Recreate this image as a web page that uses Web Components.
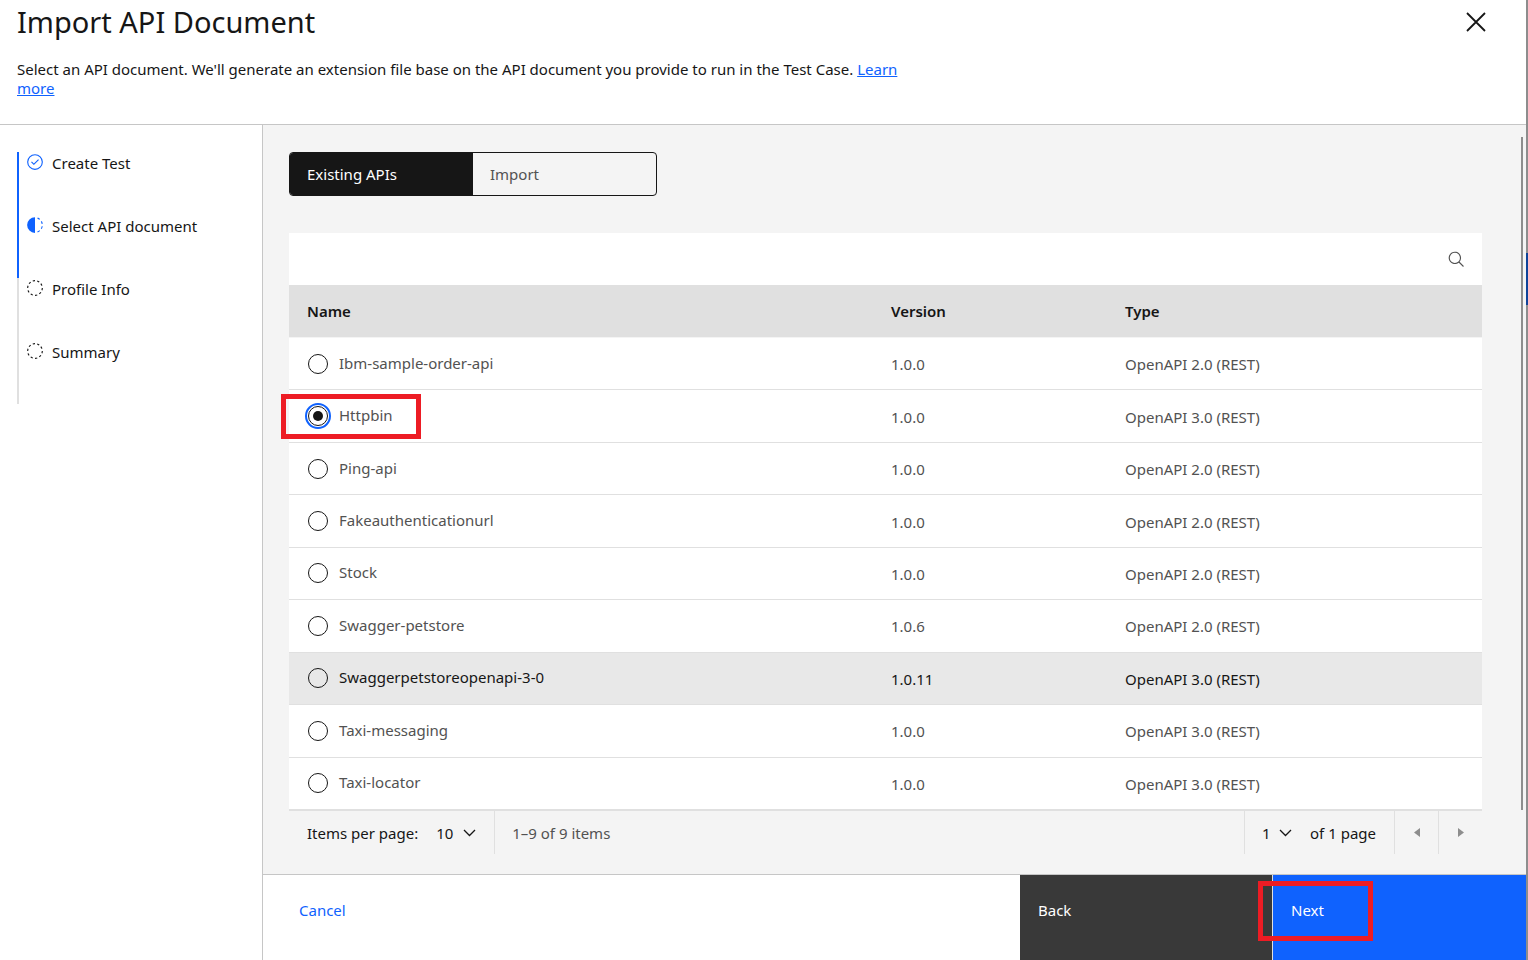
<!DOCTYPE html>
<html lang="en">
<head>
<meta charset="utf-8">
<title>Import API Document</title>
<style>
  html { background: #8d8d8d; }
  body {
    margin: 0;
    color: #161616;
    font: 15px/20px "Noto Sans", "Open Sans", sans-serif;
    --blue: #0f62fe;
    --line: #c6c6c6;
    --soft: #e0e0e0;
    --muted: #525252;
    --layer: #f4f4f4;
  }
</style>
</head>
<body>
<wizard-shell>
  <wizard-header slot="header" heading="Import API Document">
    Select an API document. We'll generate an extension file base on the API document you provide to run in the Test Case.
    <a slot="link" href="#learn">Learn more</a>
  </wizard-header>
  <progress-steps slot="side">
    <progress-step state="complete">Create Test</progress-step>
    <progress-step state="current">Select API document</progress-step>
    <progress-step>Profile Info</progress-step>
    <progress-step>Summary</progress-step>
  </progress-steps>
  <content-switcher></content-switcher>
  <api-table></api-table>
  <page-bar></page-bar>
  <wizard-footer slot="footer"></wizard-footer>
</wizard-shell>

<script>
const define = (name, html, setup) => {
  const template = document.createElement('template');
  template.innerHTML = '<style>*{box-sizing:border-box}button,select,input{font:inherit;color:inherit}</style>' + html;
  customElements.define(name, class extends HTMLElement {
    connectedCallback() {
      if (this.shadowRoot) return;
      const root = this.attachShadow({ mode: 'open' });
      root.append(template.content.cloneNode(true));
      if (setup) setup(this, root);
    }
  });
};

define('wizard-shell', `
<style>
  :host { display: grid; grid-template: auto 1fr auto / 263px minmax(0, 1fr); position: relative; min-height: 100vh; margin-right: 2px; background: #fff; }
  header { grid-column: 1 / -1; border-bottom: 1px solid var(--line); }
  aside { grid-row: 2 / 4; border-right: 1px solid var(--line); padding: 27px 16px; }
  main { display: flex; background: var(--layer); }
  .content { flex: 1; min-width: 0; padding: 27px 39px 20px 26px; }
  .bar { width: 2px; margin: 12px 3px 64px 0; background: #8d8d8d; }
  .edge { position: absolute; left: 100%; top: 253px; width: 2px; height: 52px; background: #0f4399; }
</style>
<header><slot name="header"></slot></header>
<aside><slot name="side"></slot></aside>
<main><div class="content"><slot></slot></div><div class="bar"></div></main>
<slot name="footer"></slot>
<div class="edge"></div>`);

define('wizard-header', `
<style>
  :host { display: flex; justify-content: space-between; align-items: flex-start; height: 124px; padding: 0 34px 0 17px; }
  h1 { margin: 2px 0 18px; font-size: 29px; line-height: 40px; font-weight: 400; }
  p { margin: 0; max-width: 888px; line-height: 19px; }
  ::slotted(a) { color: var(--blue); }
  button { display: grid; place-items: center; width: 32px; height: 32px; margin-top: 6px; padding: 0; border: 0; background: none; }
</style>
<div><h1></h1><p><slot></slot> <slot name="link"></slot></p></div>
<button type="button" aria-label="Close"><svg width="20" height="20" fill="none" stroke="#161616" stroke-width="1.8"><path d="M1 1l18 18M19 1L1 19"/></svg></button>`,
(host, root) => {
  root.querySelector('h1').textContent = host.getAttribute('heading');
});

define('progress-steps', `
<style>:host { display: block; }</style><slot></slot>`);

const STEP_ICONS = {
  complete: '<path d="M14 21.414L9 16.413 10.413 15 14 18.586 21.585 11 23 12.415z"/><path d="M16 2a14 14 0 1014 14A14 14 0 0016 2zm0 26a12 12 0 1112-12 12 12 0 01-12 12z"/>',
  current: '<path d="M23.764 6.859l1.285-1.531A13.976 13.976 0 0020.867 2.887l-.683 1.878A11.973 11.973 0 0123.764 6.859zM27.81 14l1.968-.413A13.889 13.889 0 0028.14 9.046L26.409 10A12.52 12.52 0 0127.81 14zM20.184 27.235l.683 1.878a13.976 13.976 0 004.182-2.441l-1.285-1.531A11.973 11.973 0 0120.184 27.235zM26.409 22L28.14 23a14.138 14.138 0 001.638-4.587L27.81 18.066A12.152 12.152 0 0126.409 22zM16 30V2a14 14 0 000 28z"/>',
  pending: '<path d="M7.7 4.7a14.7 14.7 0 00-3 3.1L6.3 9A13.26 13.26 0 018.9 6.3zM4.6 12.3l-1.9-.6A12.51 12.51 0 002 16H4A11.48 11.48 0 014.6 12.3zM2.7 20.4a14.4 14.4 0 002 3.9l1.6-1.2a12.89 12.89 0 01-1.7-3.3zM7.8 27.3a14.4 14.4 0 003.9 2l.6-1.9A12.89 12.89 0 019 25.7zM11.7 2.7l.6 1.9A11.48 11.48 0 0116 4V2A12.51 12.51 0 0011.7 2.7zM24.2 27.3a15.18 15.18 0 003.1-3.1L25.7 23A11.53 11.53 0 0123 25.7zM27.4 19.7l1.9.6A15.47 15.47 0 0030 16H28A11.48 11.48 0 0127.4 19.7zM29.2 11.6a14.4 14.4 0 00-2-3.9L25.6 8.9a12.89 12.89 0 011.7 3.3zM24.1 4.6a14.4 14.4 0 00-3.9-2l-.6 1.9a12.89 12.89 0 013.3 1.7zM20.3 29.3l-.6-1.9A11.48 11.48 0 0116 28v2A21.42 21.42 0 0020.3 29.3z"/>'
};
define('progress-step', `
<style>
  :host { display: flex; align-items: flex-start; gap: 8px; min-height: 63px; margin-left: 1px; padding-left: 7px; border-left: 2px solid var(--soft); }
  :host([state]) { border-color: var(--blue); }
  svg { flex: none; margin-top: 1px; fill: #161616; }
  :host([state]) svg { fill: var(--blue); }
  span { margin-top: 1px; }
</style>
<svg width="18" height="18" viewBox="0 0 32 32"></svg><span><slot></slot></span>`,
(host, root) => {
  root.querySelector('svg').innerHTML = STEP_ICONS[host.getAttribute('state') || 'pending'];
});

define('content-switcher', `
<style>
  :host { display: grid; grid-template-columns: 1fr 1fr; width: 368px; height: 44px; margin-bottom: 37px; border: 1px solid #161616; border-radius: 4px; overflow: hidden; box-sizing: border-box; }
  button { border: 0; padding: 0 17px; text-align: left; background: none; color: var(--muted); }
  button[aria-selected="true"] { background: #161616; color: #fff; }
</style>
<button type="button" role="tab" aria-selected="true">Existing APIs</button>
<button type="button" role="tab" aria-selected="false">Import</button>`);

const APIS = [
  ['Ibm-sample-order-api', '1.0.0', '2.0'],
  ['Httpbin', '1.0.0', '3.0'],
  ['Ping-api', '1.0.0', '2.0'],
  ['Fakeauthenticationurl', '1.0.0', '2.0'],
  ['Stock', '1.0.0', '2.0'],
  ['Swagger-petstore', '1.0.6', '2.0'],
  ['Swaggerpetstoreopenapi-3-0', '1.0.11', '3.0'],
  ['Taxi-messaging', '1.0.0', '3.0'],
  ['Taxi-locator', '1.0.0', '3.0']
];
define('api-table', `
<style>
  :host { display: block; }
  .tools { display: flex; justify-content: flex-end; height: 52px; background: #fff; }
  .tools button { display: grid; place-items: center; width: 52px; padding: 0 1px 1px 0; border: 0; background: none; }
  table { width: 100%; height: 525px; table-layout: fixed; border-collapse: separate; border-spacing: 0; }
  .version { width: 234px; } .type { width: 375px; }
  th { height: 53px; padding: 0 18px; text-align: left; font-weight: 600; background: var(--soft); border-bottom: 1px solid var(--layer); }
  td { padding: 0 18px; color: var(--muted); background: #fff; border-bottom: 1px solid var(--soft); }
  td:first-child { position: relative; }
  td:not(:first-child) { padding-top: 1px; }
  tr.hover td { background: #e8e8e8; color: #161616; }
  label { display: flex; align-items: center; gap: 11px; }
  label span { padding-bottom: 2px; }
  input { appearance: none; display: grid; place-items: center; width: 20px; height: 20px; margin: 0 0 0 1px; border: 1px solid #161616; border-radius: 50%; }
  input:checked { outline: 2px solid var(--blue); outline-offset: 1px; }
  input:checked::before { content: ""; width: 10px; height: 10px; border-radius: 50%; background: #161616; }
  .mark { position: absolute; left: -8px; top: 4px; width: 140px; height: 45px; border: 5px solid #ed1c24; pointer-events: none; }
</style>
<div class="tools"><button type="button" aria-label="Search"><svg width="18" height="18" viewBox="0 0 32 32" fill="#525252"><path d="M30 28.59L22.45 21A11 11 0 1021 22.45L28.59 30zM5 14a9 9 0 119 9 9 9 0 01-9-9z"/></svg></button></div>
<table>
  <colgroup><col><col class="version"><col class="type"></colgroup>
  <thead><tr><th scope="col">Name</th><th scope="col">Version</th><th scope="col">Type</th></tr></thead>
  <tbody></tbody>
</table>`,
(host, root) => {
  root.querySelector('tbody').innerHTML = APIS.map(([name, version, spec]) => `
    <tr${name.startsWith('Swaggerpet') ? ' class="hover"' : ''}>
      <td><label for="${name}"><input type="radio" name="api" id="${name}"${name === 'Httpbin' ? ' checked' : ''}><span>${name}</span></label>${name === 'Httpbin' ? '<div class="mark"></div>' : ''}</td>
      <td>${version}</td><td>OpenAPI ${spec} (REST)</td>
    </tr>`).join('');
});

define('page-bar', `
<style>
  :host { display: flex; height: 44px; border-top: 1px solid var(--soft); line-height: 44px; box-sizing: border-box; }
  .cell { display: flex; align-items: center; border-right: 1px solid var(--soft); padding: 0 18px; }
  .range { flex: 1; padding-left: 17px; color: var(--muted); }
  .pick { display: grid; align-items: center; margin-left: 18px; }
  .pick > * { grid-area: 1 / 1; }
  select { appearance: none; width: 40px; height: 43px; padding: 0; border: 0; background: none; }
  .pick svg { justify-self: end; margin-top: 2px; pointer-events: none; }
  .pages { padding-left: 0; }
  .pages .pick { margin: 0 18px 0 17px; }
  .pages select { width: 30px; }
  button { box-sizing: content-box; display: grid; place-items: center; width: 43px; padding: 0; border: 0; border-right: 1px solid var(--soft); background: none; }
  button:last-child { border: 0; }
</style>
<div class="cell"><label for="size">Items per page:</label><span class="pick"><select id="size"><option>10</option></select><svg width="13" height="9" fill="none" stroke="#161616" stroke-width="1.3"><path d="M1 1l5.500 5.500 5.500-5.500"/></svg></span></div>
<div class="cell range">1–9 of 9 items</div>
<div class="cell pages"><span class="pick"><select id="page" aria-label="Page number"><option>1</option></select><svg width="13" height="9" fill="none" stroke="#161616" stroke-width="1.3"><path d="M1 1l5.500 5.500 5.500-5.500"/></svg></span><label for="page">of 1 page</label></div>
<button type="button" aria-label="Previous page" disabled><svg width="6" height="9" fill="#8d8d8d"><path d="M6 0v9L0 4.500z"/></svg></button>
<button type="button" aria-label="Next page" disabled><svg width="6" height="9" fill="#8d8d8d"><path d="M0 0v9l6-4.500z"/></svg></button>`);

define('wizard-footer', `
<style>
  :host { display: grid; grid-template-columns: minmax(0, 1fr) 253px 253px; height: 86px; border-top: 1px solid var(--line); box-sizing: border-box; }
  button { position: relative; padding: 25px 18px; border: 0; text-align: left; line-height: 20px; display: flex; align-items: flex-start; background: #393939; color: #fff; }
  .cancel { padding-left: 36px; background: #fff; color: var(--blue); }
  .back { border-right: 1px solid var(--soft); }
  .next { background: var(--blue); }
  .mark { position: absolute; left: -15px; top: 6px; width: 115px; height: 60px; border: 5px solid #ed1c24; pointer-events: none; }
</style>
<button type="button" class="cancel">Cancel</button>
<button type="button" class="back">Back</button>
<button type="button" class="next">Next<span class="mark"></span></button>`);
</script>
</body>
</html>
